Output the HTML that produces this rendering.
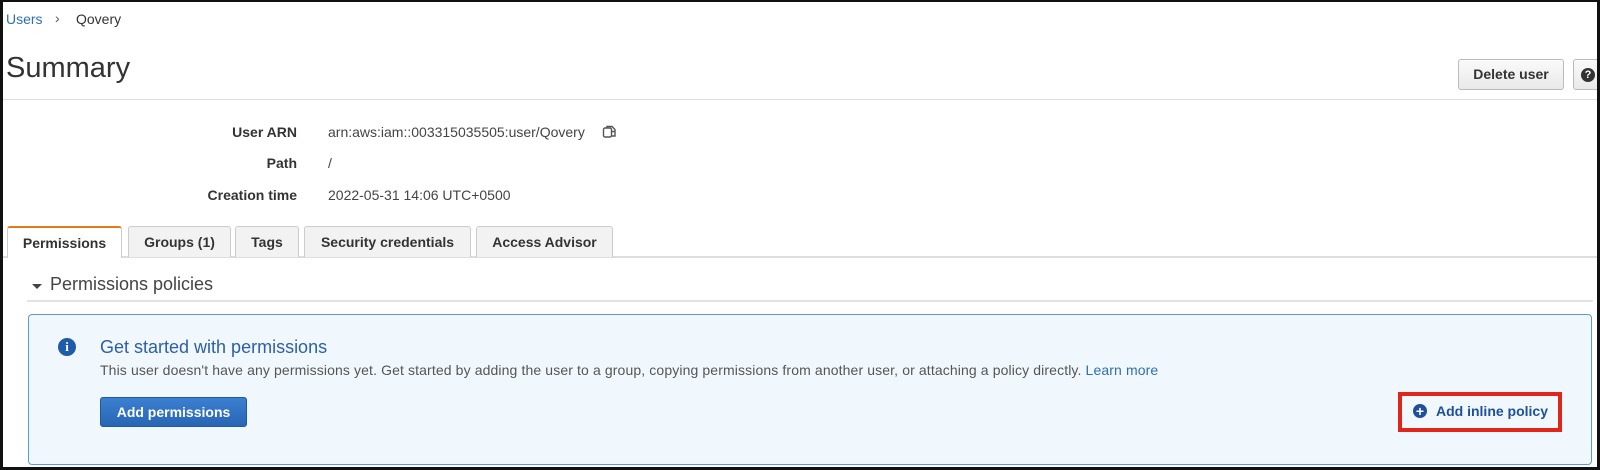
<!DOCTYPE html>
<html><head><meta charset="utf-8"><style>
*{margin:0;padding:0;box-sizing:border-box}
body{width:1600px;height:470px;overflow:hidden;background:#fff;font-family:"Liberation Sans",Arial,sans-serif;position:relative;color:#444}
.frame{position:absolute;left:0;top:0;width:1600px;height:470px;border:3px solid #111;border-top-width:2px}
.a{position:absolute;white-space:nowrap}
.lbl{font-weight:bold;font-size:14px;color:#333;text-align:right;width:200px;left:97px}
.val{left:328px;font-size:14px;color:#444}
.tab{position:absolute;top:226px;height:31px;background:#f2f2f2;border:1px solid #ccc;border-bottom:none;border-radius:3px 3px 0 0;font-weight:bold;font-size:14px;color:#333;text-align:center;line-height:30px}
</style></head><body>
<div class="a" style="left:6px;top:11px;font-size:14px;color:#2f6fb0">Users</div>
<div class="a" style="left:55px;top:10px;font-size:14px;color:#555">›</div>
<div class="a" style="left:76px;top:11px;font-size:14px;color:#333">Qovery</div>
<div class="a" style="left:6px;top:52px;font-size:29px;color:#333">Summary</div>
<div class="a" style="left:1458px;top:59px;width:106px;height:31px;border:1px solid #bbb;border-radius:3px;background:linear-gradient(#fafafa,#e9e9e9);font-weight:bold;font-size:14px;color:#333;text-align:center;line-height:29px">Delete user</div>
<div class="a" style="left:1573px;top:59px;width:40px;height:31px;border:1px solid #bbb;border-radius:3px;background:linear-gradient(#fafafa,#e9e9e9)"><div style="position:absolute;left:7px;top:8px;width:14px;height:14px;border-radius:50%;background:#333;color:#fff;font-weight:bold;font-size:11px;text-align:center;line-height:14px">?</div></div>
<div class="a" style="left:3px;top:99px;width:1594px;height:1px;background:#ddd"></div>
<div class="a lbl" style="top:124px">User ARN</div>
<div class="a val" style="top:124px">arn:aws:iam::003315035505:user/Qovery</div>
<svg class="a" style="left:602px;top:124px" width="17" height="17" viewBox="0 0 17 17" fill="none" stroke="#555" stroke-width="1.4"><rect x="1.5" y="4" width="8" height="9" rx="1.5"/><path d="M5 4V2.5h5l3 3V12H9.5"/><path d="M9.5 7.5h3.5"/></svg>
<div class="a lbl" style="top:155px">Path</div>
<div class="a val" style="top:155px">/</div>
<div class="a lbl" style="top:187px">Creation time</div>
<div class="a val" style="top:187px">2022-05-31 14:06 UTC+0500</div>
<div class="a" style="left:3px;top:256px;width:1594px;height:2px;background:#ddd"></div>
<div class="tab" style="left:7px;width:115px;background:#fff;border-top:2px solid #e07b1a;height:32px">Permissions</div>
<div class="tab" style="left:128px;width:103px">Groups (1)</div>
<div class="tab" style="left:235px;width:64px">Tags</div>
<div class="tab" style="left:304px;width:167px">Security credentials</div>
<div class="tab" style="left:476px;width:137px">Access Advisor</div>
<div class="a" style="left:32px;top:284px;width:0;height:0;border-left:5px solid transparent;border-right:5px solid transparent;border-top:5px solid #444"></div>
<div class="a" style="left:50px;top:274px;font-size:18px;color:#444">Permissions policies</div>
<div class="a" style="left:27px;top:300px;width:1566px;height:2px;background:#e3e3e3"></div>
<div class="a" style="left:28px;top:314px;width:1564px;height:151px;border:1px solid #5b9bd5;border-radius:4px;background:#f1f8fd"></div>
<div class="a" style="left:58px;top:338px;width:18px;height:18px;border-radius:50%;background:#1f5ba6;color:#fff;font-weight:bold;font-size:13px;text-align:center;line-height:18px;font-family:'Liberation Serif',serif">i</div>
<div class="a" style="left:100px;top:337px;font-size:18px;color:#2e5ea8">Get started with permissions</div>
<div class="a" style="left:100px;top:362px;font-size:14px;color:#555;letter-spacing:0.12px">This user doesn't have any permissions yet. Get started by adding the user to a group, copying permissions from another user, or attaching a policy directly. <span style="color:#2f6fb0">Learn more</span></div>
<div class="a" style="left:100px;top:397px;width:147px;height:30px;border:1px solid #1d5aa0;border-radius:3px;background:linear-gradient(#3c7fd0,#2866b5);color:#fff;font-weight:bold;font-size:14px;text-align:center;line-height:28px">Add permissions</div>
<div class="a" style="left:1398px;top:392px;width:164px;height:40px;border:4px solid #e0261b"></div>
<div class="a" style="left:1413px;top:404px;width:14px;height:14px;border-radius:50%;background:#1f4f9a;color:#fff;font-weight:bold;font-size:14px;line-height:14px;text-align:center">+</div>
<div class="a" style="left:1436px;top:403px;font-size:14px;font-weight:bold;color:#1f4f9a">Add inline policy</div>
<div class="frame"></div>
</body></html>
